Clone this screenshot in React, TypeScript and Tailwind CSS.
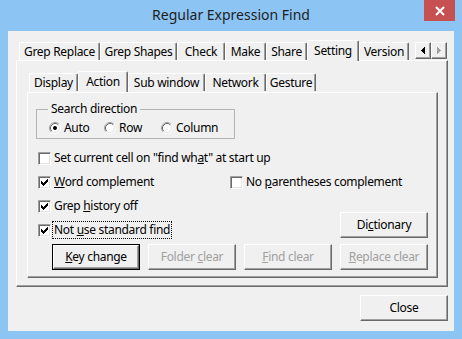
import React from 'react';

type Kids = { children?: React.ReactNode };

const raised =
  'border border-t-white border-l-white border-r-[#696969] border-b-[#696969] shadow-[inset_-1px_-1px_0_#a0a0a0]';

function Tab({ label, width, selected }: { label: string; width: string; selected?: boolean }) {
  if (selected) {
    return (
      <div
        className={`${width} h-[21px] flex items-start justify-center pt-[1px] bg-[#f0f0f0] border-t border-l border-white border-r border-r-[#696969] shadow-[inset_-1px_0_0_#a0a0a0] rounded-t-[2px]`}
      >
        {label}
      </div>
    );
  }
  return (
    <div
      className={`${width} mt-[2px] h-[18px] flex items-center justify-center border-t border-l border-white border-r border-r-[#696969] shadow-[inset_-1px_0_0_#a0a0a0] rounded-t-[2px]`}
    >
      {label}
    </div>
  );
}

function Button({ children, disabled, isDefault }: Kids & { disabled?: boolean; isDefault?: boolean }) {
  const text = disabled ? 'text-[#a0a0a0]' : 'text-black';
  if (isDefault) {
    return (
      <div className="w-[88px] h-[26px] border border-black flex">
        <div className={`flex-1 flex items-center justify-center ${raised} ${text}`}>
          <span>{children}</span>
        </div>
      </div>
    );
  }
  return (
    <div className={`w-[88px] h-[26px] flex items-center justify-center ${raised} ${text}`}>
      <span>{children}</span>
    </div>
  );
}

function CheckBox({ checked }: { checked?: boolean }) {
  return (
    <div className="w-[13px] h-[13px] shrink-0 bg-white border border-t-[#a0a0a0] border-l-[#a0a0a0] border-r-white border-b-white shadow-[inset_1px_1px_0_#696969,inset_-1px_-1px_0_#e3e3e3] flex items-center justify-center">
      {checked && (
        <svg width="7" height="7" viewBox="0 0 7 7" shapeRendering="crispEdges">
          <path d="M0 2h1v1h1v1h1v-1h1v-1h1v-1h1v-1h1v3h-1v1h-1v1h-1v1h-1v1h-1v-1h-1v-1h-1v-1h-1z" fill="#000" />
        </svg>
      )}
    </div>
  );
}

function Radio({ checked }: { checked?: boolean }) {
  return (
    <svg width="12" height="12" viewBox="0 0 12 12" className="shrink-0">
      <circle cx="6" cy="6" r="4.5" fill="#fff" />
      <path d="M2.11 9.89 A5.5 5.5 0 0 1 9.89 2.11" stroke="#a0a0a0" fill="none" />
      <path d="M9.89 2.11 A5.5 5.5 0 0 1 2.11 9.89" stroke="#fff" fill="none" />
      <path d="M2.82 9.18 A4.5 4.5 0 0 1 9.18 2.82" stroke="#696969" fill="none" />
      <path d="M9.18 2.82 A4.5 4.5 0 0 1 2.82 9.18" stroke="#e3e3e3" fill="none" />
      {checked && <circle cx="6" cy="6" r="2" fill="#000" />}
    </svg>
  );
}

function CheckRow({ checked, focused, children }: Kids & { checked?: boolean; focused?: boolean }) {
  return (
    <div className="h-[24px] flex items-center">
      <CheckBox checked={checked} />
      <div
        className={`ml-[1px] px-[1px] h-[18px] flex items-center border border-dotted ${focused ? 'border-black' : 'border-transparent'}`}
      >
        <span>{children}</span>
      </div>
    </div>
  );
}

function Arrow({ dir, disabled }: { dir: 'left' | 'right'; disabled?: boolean }) {
  return (
    <div className={`w-[16px] h-[17px] flex items-center justify-center ${raised}`}>
      <svg width="4" height="7" viewBox="0 0 4 7" shapeRendering="crispEdges">
        {dir === 'left' ? (
          <path d="M4 0 L0 3.5 L4 7 Z" fill={disabled ? '#a0a0a0' : '#000'} />
        ) : (
          <path d="M0 0 L4 3.5 L0 7 Z" fill={disabled ? '#a0a0a0' : '#000'} />
        )}
      </svg>
    </div>
  );
}

export default function App() {
  return (
    <div className="w-[462px] h-[339px] bg-[#8cc4f4] flex flex-col font-['Noto_Sans',sans-serif] text-[12px] tracking-[-0.3px] text-black overflow-hidden">
      {/* title bar */}
      <div className="h-[31px] relative shrink-0">
        <div className="text-center text-[14px] tracking-normal leading-[30px] text-[#1e1e1e]">Regular Expression Find</div>
        <div className="absolute right-[7px] top-0 w-[31px] h-[21px] bg-[#c75050] flex items-center justify-center">
          <svg width="10" height="10" viewBox="0 0 10 10">
            <path d="M1 1 L9 9 M9 1 L1 9" stroke="#fff" strokeWidth="2" />
          </svg>
        </div>
      </div>

      {/* client area */}
      <div className="mx-[8px] h-[300px] bg-[#f0f0f0] flex flex-col">
        {/* outer tabs */}
        <div className="mt-[9px] ml-[8px] w-[432px] h-[20px] pl-[3px] pr-[1px] flex items-start relative z-10">
          <Tab label="Grep Replace" width="w-[81px]" />
          <Tab label="Grep Shapes" width="w-[77px]" />
          <Tab label="Check" width="w-[48px]" />
          <Tab label="Make" width="w-[41px]" />
          <Tab label="Share" width="w-[41px]" />
          <Tab label="Setting" width="w-[52px]" selected />
          <Tab label="Version" width="w-[50px]" />
          <div className="ml-auto mt-[2px] flex">
            <Arrow dir="left" />
            <Arrow dir="right" disabled />
          </div>
        </div>

        <div className={`ml-[8px] w-[432px] h-[227px] ${raised} flex flex-col`}>
          {/* inner tabs */}
          <div className="mt-[10px] ml-[10px] w-[411px] h-[21px] pl-[2px] flex items-start relative z-10">
            <Tab label="Display" width="w-[49px]" />
            <Tab label="Action" width="w-[50px]" selected />
            <Tab label="Sub window" width="w-[77px]" />
            <Tab label="Network" width="w-[61px]" />
            <Tab label="Gesture" width="w-[50px]" />
          </div>

          <div className={`ml-[10px] w-[411px] h-[186px] ${raised} flex flex-col`}>
            <fieldset className="mt-[8px] ml-[8px] w-[199px] border border-[#b4b4b4] flex">
              <legend className="ml-[11px] px-[3px] leading-[16px]">Search direction</legend>
              <div className="h-[21px] pl-[12px] flex items-center">
                <div className="w-[55px] flex items-center gap-[3px]">
                  <Radio checked />
                  <span>Auto</span>
                </div>
                <div className="w-[57px] flex items-center gap-[3px]">
                  <Radio />
                  <span>Row</span>
                </div>
                <div className="flex items-center gap-[3px]">
                  <Radio />
                  <span>Column</span>
                </div>
              </div>
            </fieldset>

            <div className="mt-[7px] ml-[10px] flex flex-col">
              <CheckRow>
                Set current cell on "find wh<u>a</u>t" at start up
              </CheckRow>
              <div className="flex">
                <div className="w-[192px]">
                  <CheckRow checked>
                    <u>W</u>ord complement
                  </CheckRow>
                </div>
                <CheckRow>
                  No <u>p</u>arentheses complement
                </CheckRow>
              </div>
              <div className="flex">
                <div className="flex flex-col">
                  <CheckRow checked>
                    Grep <u>h</u>istory off
                  </CheckRow>
                  <CheckRow checked focused>
                    Not <u>u</u>se standard find
                  </CheckRow>
                </div>
                <div className="ml-auto mr-[9px] self-end mb-[4px]">
                  <Button>
                    Di<u>c</u>tionary
                  </Button>
                </div>
              </div>
            </div>

            <div className="mt-[2px] ml-[24px] flex gap-[8px]">
              <Button isDefault>
                <u>K</u>ey change
              </Button>
              <Button disabled>
                Folder <u>c</u>lear
              </Button>
              <Button disabled>
                <u>F</u>ind clear
              </Button>
              <Button disabled>
                <u>R</u>eplace clear
              </Button>
            </div>
          </div>
        </div>

        <div className="mt-[8px] mr-[6px] self-end">
          <Button>Close</Button>
        </div>
      </div>
    </div>
  );
}
